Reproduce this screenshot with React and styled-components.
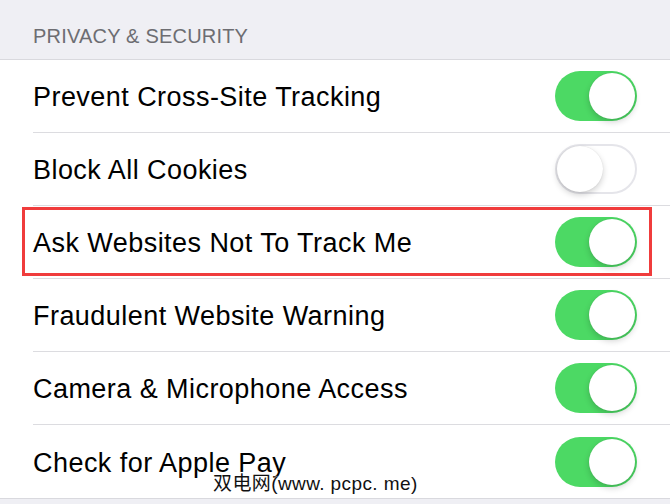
import styled, { createGlobalStyle } from 'styled-components'

const GlobalStyle = createGlobalStyle`
  html, body { margin: 0; padding: 0; background: #efeff4; }
  body { font-family: "Liberation Sans", Arial, sans-serif; -webkit-font-smoothing: antialiased; }
`

const Page = styled.div`
  width: 670px;
  height: 504px;
  background: #efeff4;
  position: relative;
  overflow: hidden;
`

const SectionHeader = styled.div`
  height: 60px;
  box-sizing: border-box;
  padding: 25px 0 0 33px;
  font-size: 20px;
  color: #6d6d72;
  letter-spacing: 0.2px;
  border-bottom: 1px solid #d9d9de;
`

const Group = styled.div`
  background: #fff;
  border-bottom: 1px solid #d9d9de;
`

const Row = styled.div`
  position: relative;
  height: 73px;
  padding-left: 33px;
`

const RowInner = styled.div`
  height: 100%;
  box-sizing: border-box;
  display: flex;
  align-items: center;
  justify-content: space-between;
  padding-right: 33px;
  border-bottom: ${p => (p.last ? 'none' : '1px solid #dcdce0')};
`

const Label = styled.span`
  font-size: 27px;
  color: #000;
  letter-spacing: 0.45px;
  padding-top: 3px;
`

const Highlight = styled.div`
  position: absolute;
  left: 22px;
  right: 18px;
  top: 1px;
  bottom: 3px;
  border: 3px solid #f03c3c;
  pointer-events: none;
`

const Track = styled.div`
  width: 82px;
  height: 50px;
  box-sizing: border-box;
  border-radius: 25px;
  background: ${p => (p.on ? '#4cd964' : '#fff')};
  border: ${p => (p.on ? 'none' : '2px solid #e5e5ea')};
  display: flex;
  align-items: center;
  justify-content: ${p => (p.on ? 'flex-end' : 'flex-start')};
  padding: ${p => (p.on ? '0 2px' : '0')};
`

const Knob = styled.div`
  width: 46px;
  height: 46px;
  border-radius: 50%;
  background: #fff;
  box-shadow: 0 3px 6px rgba(0, 0, 0, 0.18), 0 0 1px rgba(0, 0, 0, 0.15);
`

const Watermark = styled.div`
  position: absolute;
  left: 213px;
  top: 468px;
  font-size: 19px;
  letter-spacing: 0.4px;
  color: #111;
  font-family: "Liberation Sans", "Noto Sans CJK SC", sans-serif;
  text-shadow: 0 0 2px #fff, 0 0 2px #fff, 0 0 3px #fff;
`

const rows = [
  { label: 'Prevent Cross-Site Tracking', on: true },
  { label: 'Block All Cookies', on: false },
  { label: 'Ask Websites Not To Track Me', on: true, highlight: true },
  { label: 'Fraudulent Website Warning', on: true },
  { label: 'Camera & Microphone Access', on: true },
  { label: 'Check for Apple Pay', on: true },
]

function Toggle({ on }) {
  return (
    <Track on={on}>
      <Knob />
    </Track>
  )
}

export default function App() {
  return (
    <Page>
      <GlobalStyle />
      <SectionHeader>PRIVACY &amp; SECURITY</SectionHeader>
      <Group>
        {rows.map((r, i) => (
          <Row key={r.label}>
            <RowInner last={i === rows.length - 1}>
              <Label>{r.label}</Label>
              <Toggle on={r.on} />
            </RowInner>
            {r.highlight && <Highlight />}
          </Row>
        ))}
      </Group>
      <Watermark>双电网(www. pcpc. me)</Watermark>
    </Page>
  )
}
